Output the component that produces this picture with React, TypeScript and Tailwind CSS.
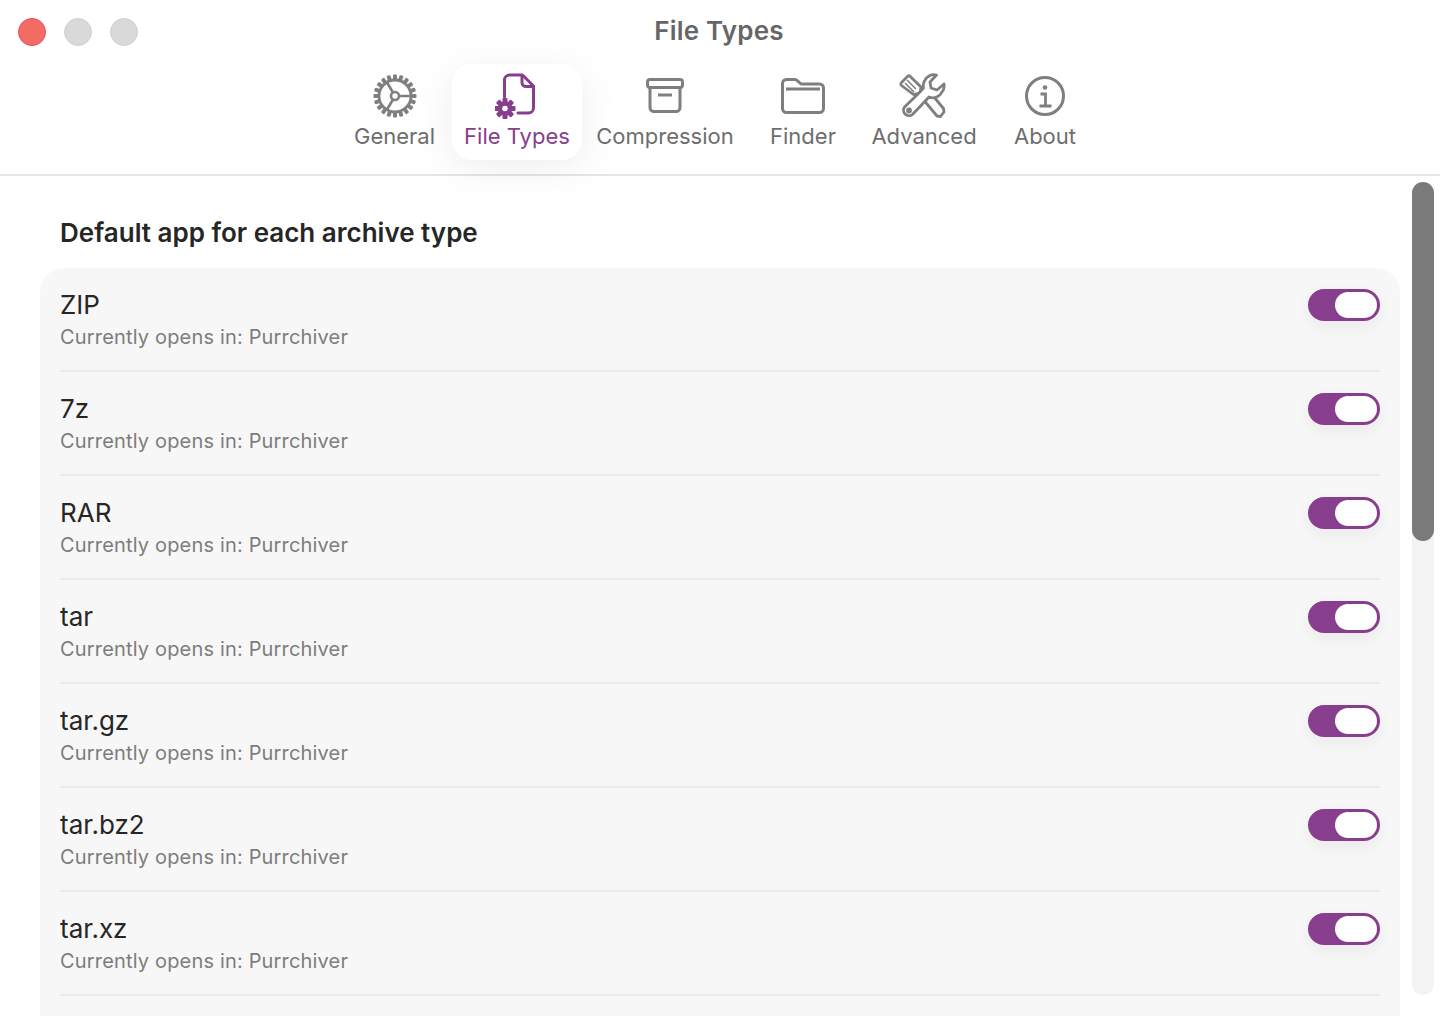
import type { ReactNode } from "react";

const font = { fontFamily: "Inter, 'Noto Sans', sans-serif" };

const types = ["ZIP", "7z", "RAR", "tar", "tar.gz", "tar.bz2", "tar.xz"];

function GearIcon() {
  const teeth = Array.from({ length: 20 }, (_, i) => i * 18);
  return (
    <svg width="44" height="44" viewBox="0 0 44 44" fill="none" stroke="currentColor">
      {teeth.map((a) => (
        <rect key={a} x="20" y="0.500" width="4" height="5" rx="1" fill="currentColor" stroke="none" transform={`rotate(${a} 22 22)`} />
      ))}
      <circle cx="22" cy="22" r="16" strokeWidth="2.800" />
      <circle cx="22" cy="22" r="4" strokeWidth="2.600" />
      <path d="M26 22h11M20 18.500 14 8.500M20 25.500 14 35.500" strokeWidth="2.600" />
    </svg>
  );
}

function FileGearIcon() {
  const teeth = [0, 45, 90, 135, 180, 225, 270, 315];
  return (
    <svg width="44" height="46" viewBox="0 0 44 46" fill="none" stroke="currentColor">
      <path
        d="M9.500 24V7a5 5 0 0 1 5-5h13L38.500 13V35a5 5 0 0 1-5 5H23"
        strokeWidth="3"
        strokeLinejoin="round"
        strokeLinecap="round"
      />
      <path d="M27 2.500v7a4 4 0 0 0 4 4h7.500" strokeWidth="3" strokeLinejoin="round" />
      <g stroke="none" fill="currentColor">
        {teeth.map((a) => (
          <rect key={a} x="7.500" y="25" width="5" height="5" rx="1" transform={`rotate(${a} 10 35.500)`} />
        ))}
      </g>
      <circle cx="10" cy="35.500" r="5" strokeWidth="4.500" />
    </svg>
  );
}

function BoxIcon() {
  return (
    <svg width="38" height="36" viewBox="0 0 38 36" fill="none" stroke="currentColor" strokeWidth="3">
      <rect x="1.500" y="1.500" width="35" height="8" rx="2.500" />
      <path d="M4 9.500v20a4 4 0 0 0 4 4h22a4 4 0 0 0 4-4v-20" />
      <path d="M12 17h14" />
    </svg>
  );
}

function FolderIcon() {
  return (
    <svg width="44" height="36" viewBox="0 0 44 36" fill="none" stroke="currentColor" strokeWidth="3" strokeLinejoin="round">
      <path d="M1.500 5.500a4 4 0 0 1 4-4h8a4 4 0 0 1 3 1.300L20 6h18.500a4 4 0 0 1 4 4v20.500a4 4 0 0 1-4 4h-33a4 4 0 0 1-4-4z" />
      <path d="M5 11h34" />
    </svg>
  );
}

function ToolsIcon() {
  return (
    <svg className="-ml-[2px]" width="48" height="46" viewBox="0 0 48 46" fill="none" stroke="currentColor" strokeWidth="2.800" strokeLinejoin="round">
      <path d="M2.500 9.500 8.500 3.500a2 2 0 0 1 2.800 0L22 14l-1 6.500-6.500 1L2.500 12.500a2 2 0 0 1 0-3z" />
      <path d="M8 7l9 9M6 10l9 9" strokeWidth="1.500" />
      <path d="m23 25 7-7 14.500 17.500 .5 3.500-3.500 4.500-3.500-.5z" />
      <path d="M18 22 6 33.500a5.500 5.500 0 0 0 7.500 8L30 24a10 10 0 0 0 13-5 10 10 0 0 0 2-8l-7 6-6-2-1-6 6.500-7a10 10 0 0 0-12 6 10 10 0 0 0-1 7z" fill="#fff" />
      <circle cx="10" cy="37.500" r="1.500" />
    </svg>
  );
}

function InfoIcon() {
  return (
    <svg width="40" height="40" viewBox="0 0 40 40" fill="none" stroke="currentColor" strokeWidth="3">
      <circle cx="20" cy="20" r="18.500" />
      <circle cx="20" cy="11.500" r="2.300" fill="currentColor" stroke="none" />
      <path d="M15.500 18H20.500V30M14.500 30h12" strokeWidth="2.800" />
    </svg>
  );
}

const tabs: { label: string; icon: ReactNode; width: string; active?: boolean }[] = [
  { label: "General", icon: <GearIcon />, width: "w-[115px]" },
  { label: "File Types", icon: <FileGearIcon />, width: "w-[130px]", active: true },
  { label: "Compression", icon: <BoxIcon />, width: "w-[166px]" },
  { label: "Finder", icon: <FolderIcon />, width: "w-[110px]" },
  { label: "Advanced", icon: <ToolsIcon />, width: "w-[132px]" },
  { label: "About", icon: <InfoIcon />, width: "w-[110px]" },
];

function Toggle() {
  return (
    <div className="flex h-8 w-[72px] shrink-0 items-center justify-end rounded-full bg-[#873e8d] pr-[3px] shadow-[0_6px_16px_rgba(0,0,0,0.06)]">
      <div className="h-[26px] w-[42px] rounded-full bg-white" />
    </div>
  );
}

export default function App() {
  return (
    <div className="relative h-[1016px] w-[1440px] overflow-hidden bg-white" style={font}>
      <div className="flex h-[64px] items-center px-[18px] pb-[1px]">
        <div className="flex gap-[18px]">
          <div className="h-7 w-7 rounded-full border border-[#ec4c47] bg-[#f56a65]" />
          <div className="h-7 w-7 rounded-full border border-[#d0d0d0] bg-[#d9d9d9]" />
          <div className="h-7 w-7 rounded-full border border-[#d0d0d0] bg-[#d9d9d9]" />
        </div>
        <div className="absolute left-0 right-[2px] top-[14px] text-center text-[26px] leading-[34px] font-semibold tracking-[0.2px] text-[#666666]">
          File Types
        </div>
      </div>

      <div className="flex h-[112px] justify-center border-b-2 border-[#e5e5e5] pr-[3px]">
        <div className="flex h-24 items-stretch">
          {tabs.map((t) => (
            <div
              key={t.label}
              className={`flex ${t.width} flex-col items-center rounded-[20px] ${
                t.active
                  ? "bg-white text-[#873e8d] shadow-[0_8px_40px_rgba(0,0,0,0.07)]"
                  : "text-[#7f7f7f]"
              }`}
            >
              <div className="flex h-[58px] items-center justify-center pt-[5px]">{t.icon}</div>
              <div className={`text-[22px] leading-[28px] whitespace-nowrap ${t.active ? "" : "text-[#6e6e6e]"}`}>
                {t.label}
              </div>
            </div>
          ))}
        </div>
      </div>

      <div className="flex">
        <div className="w-[1400px] pl-10">
          <div className="pt-[41px] pl-5 text-[26px] leading-8 font-semibold text-[#262626]">
            Default app for each archive type
          </div>
          <div className="mt-[19px] rounded-t-[24px] bg-[#f7f7f7] px-5 pb-10">
            {types.map((name) => (
              <div key={name} className="flex h-[104px] items-start justify-between border-b-2 border-[#ebebeb]">
                <div>
                  <div className="pt-[19px] text-[26px] leading-9 text-[#262626]">{name}</div>
                  <div className="text-[20px] leading-7 tracking-[0.17px] text-[#7d7d7d]">Currently opens in: Purrchiver</div>
                </div>
                <div className="pt-[21px]">
                  <Toggle />
                </div>
              </div>
            ))}
          </div>
        </div>
        <div className="mt-1.5 ml-3 h-[813px] w-[22px] rounded-full bg-[#f3f3f3]">
          <div className="h-[359px] rounded-full bg-[#7a7a7a]" />
        </div>
      </div>
    </div>
  );
}
